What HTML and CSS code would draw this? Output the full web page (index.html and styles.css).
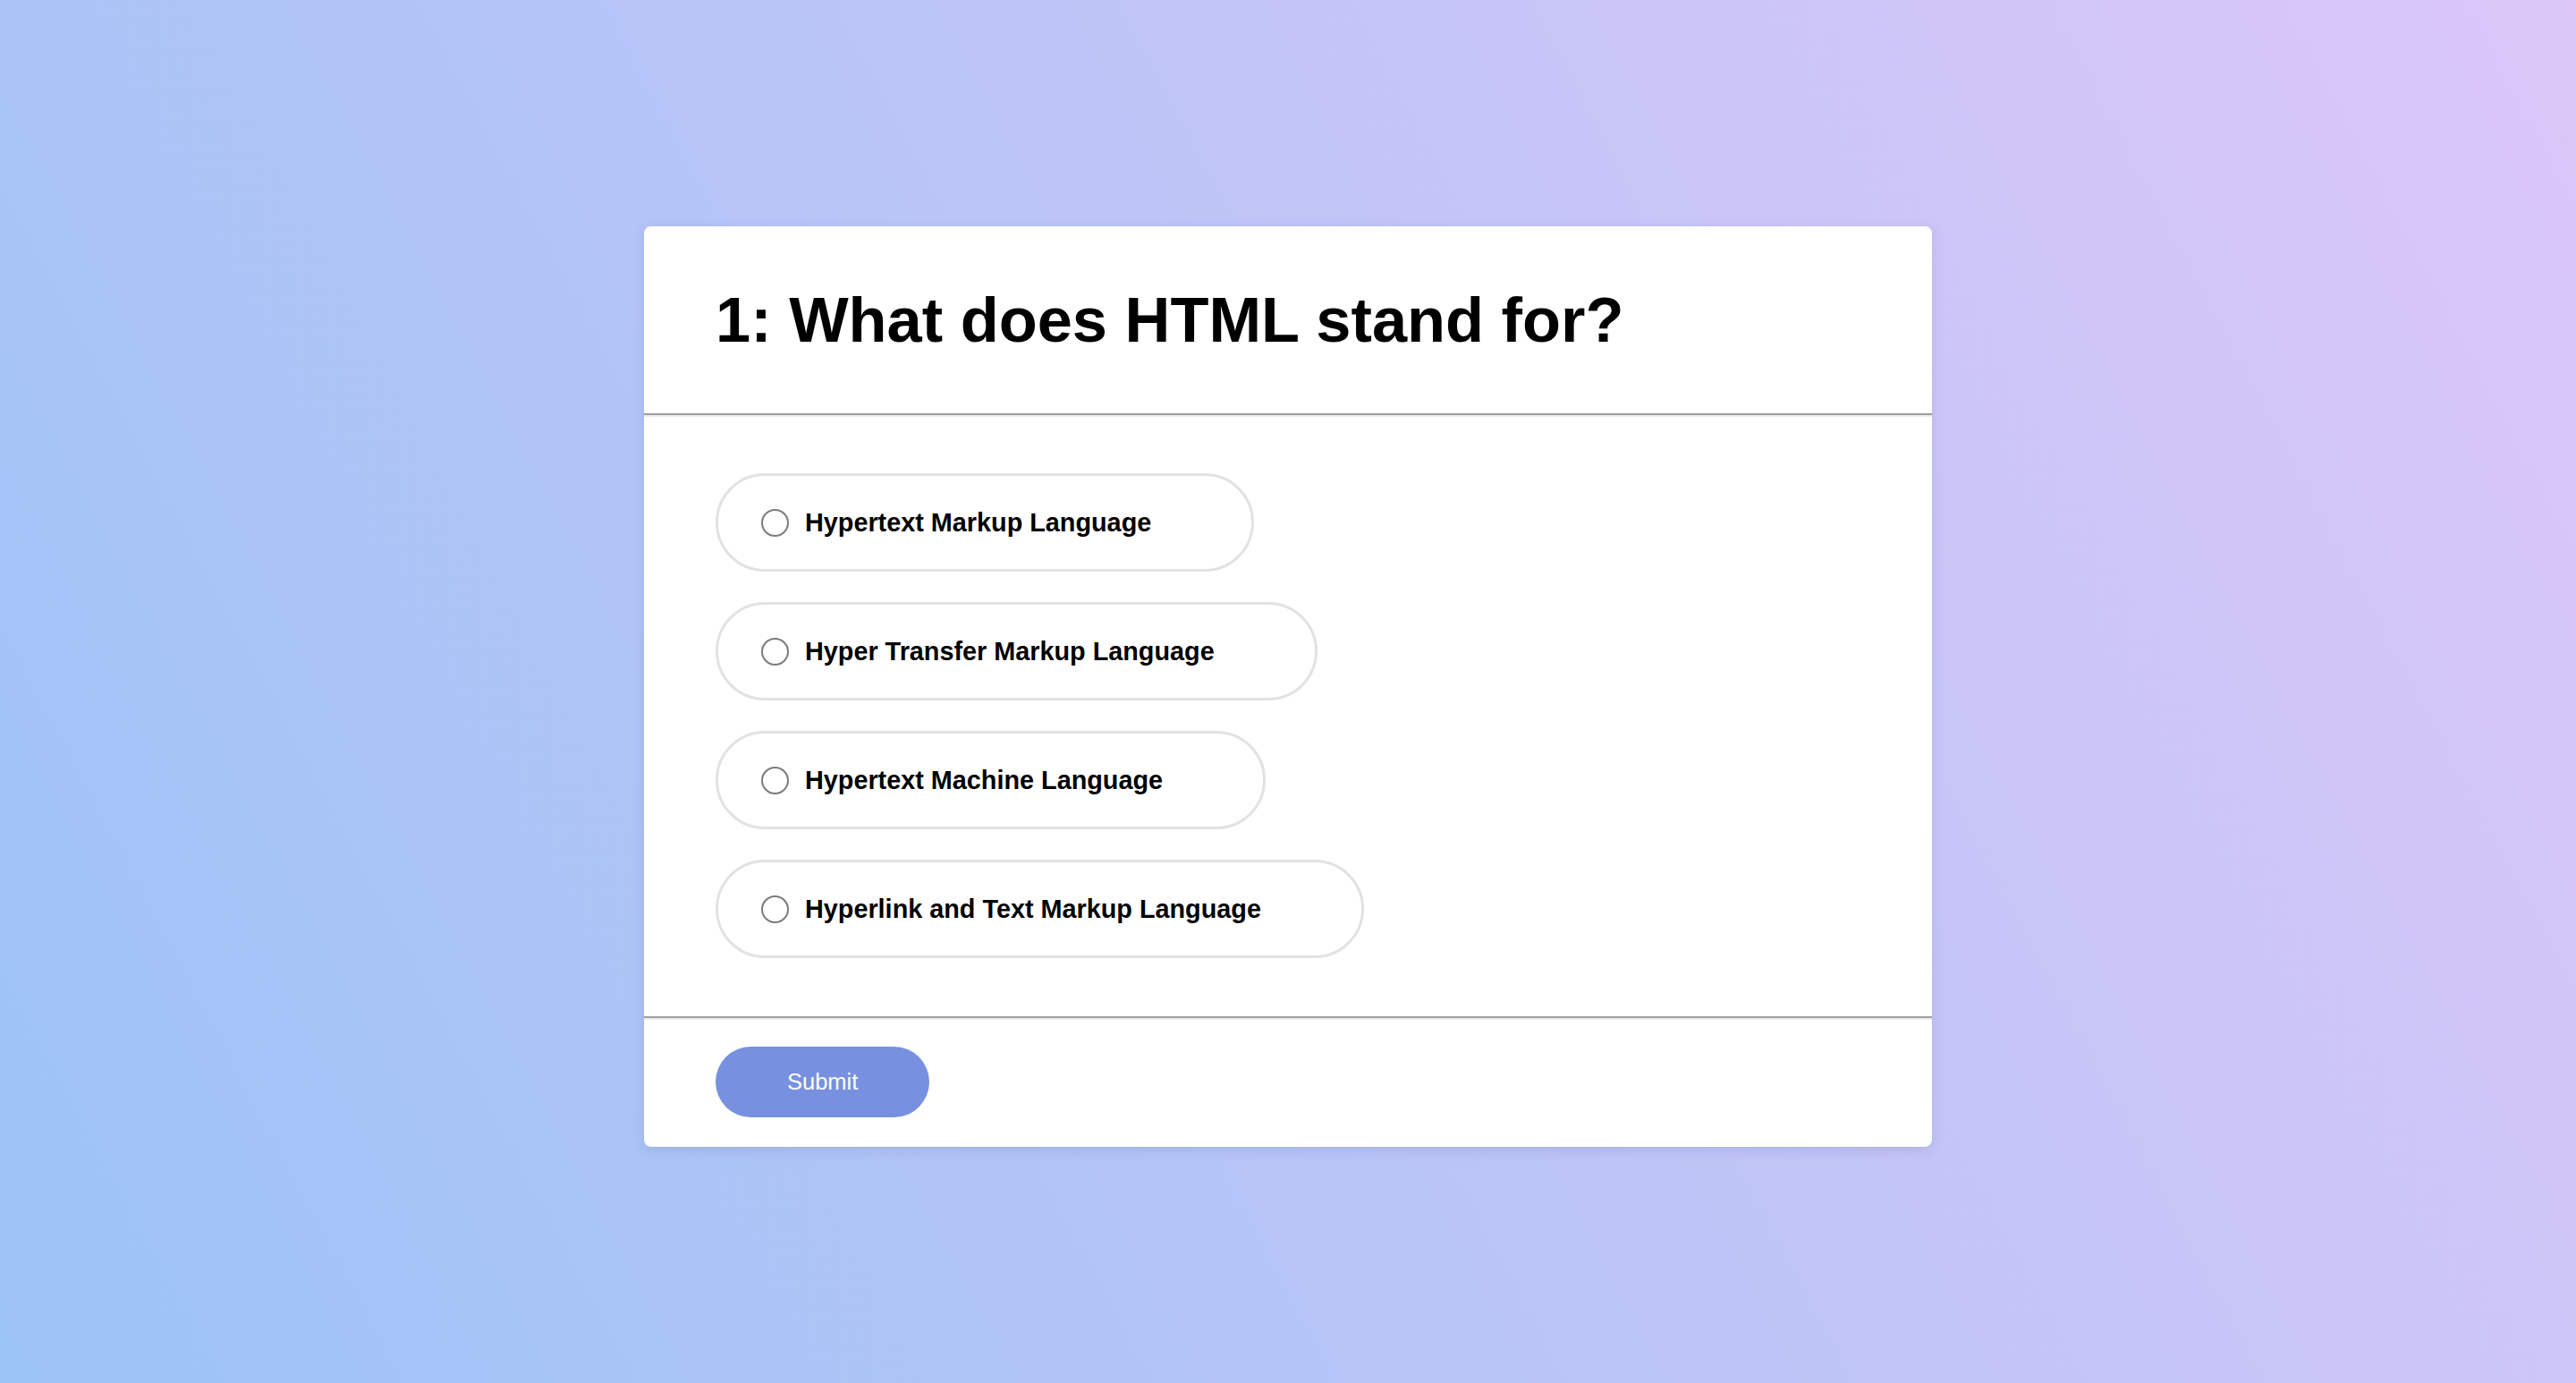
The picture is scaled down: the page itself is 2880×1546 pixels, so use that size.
FILE: index.html
```html
<!DOCTYPE html>
<html lang="en">
<head>
<meta charset="utf-8">
<title>Quiz</title>
<link rel="stylesheet" href="styles.css">
</head>
<body>
<div class="page">
  <main class="quiz-card">
    <header class="quiz-header">
      <h1 class="quiz-title">1: What does HTML stand for?</h1>
    </header>
    <hr class="divider">
    <form class="quiz-form">
      <div class="quiz-body">
        <label class="option"><input type="radio" name="q1"><span>Hypertext Markup Language</span></label>
        <label class="option"><input type="radio" name="q1"><span>Hyper Transfer Markup Language</span></label>
        <label class="option"><input type="radio" name="q1"><span>Hypertext Machine Language</span></label>
        <label class="option"><input type="radio" name="q1"><span>Hyperlink and Text Markup Language</span></label>
      </div>
      <hr class="divider">
      <footer class="quiz-footer">
        <button type="button" class="submit-btn">Submit</button>
      </footer>
    </form>
  </main>
</div>
</body>
</html>
```

FILE: styles.css
```css
html, body {
  margin: 0;
  padding: 0;
  height: 100%;
}

body {
  background: linear-gradient(62deg, rgb(156, 195, 246) 0%, rgb(220, 198, 248) 100%);
  font-family: "Liberation Sans", Arial, Helvetica, sans-serif;
  color: #000;
}

.page {
  padding-top: 253px;
}

.quiz-card {
  width: 1440px;
  margin: 0 auto;
  background: #fff;
  border-radius: 8px;
  overflow: hidden;
  box-shadow: 0 4px 14px rgba(70, 80, 140, 0.14);
}

.quiz-header {
  height: 209px;
  padding: 0 80px;
  display: flex;
  align-items: center;
}

.quiz-title {
  margin: 0;
  font-size: 70.4px;
  font-weight: 700;
  color: #000;
}

.divider {
  margin: 0;
  height: 0;
  border: 0;
  border-top: 2px solid #9e9e9e;
  border-bottom: 2px solid #ececec;
}

.quiz-form {
  margin: 0;
}

.quiz-body {
  padding: 63px 80px 65px;
  display: flex;
  flex-direction: column;
  align-items: flex-start;
  gap: 34px;
}

.option {
  box-sizing: border-box;
  height: 110px;
  display: flex;
  align-items: center;
  gap: 18px;
  padding: 0 112px 0 48px;
  border: 3px solid #e2e2e2;
  border-radius: 55px;
  font-size: 28.8px;
  font-weight: 700;
  color: #000;
  cursor: pointer;
}

.option input {
  appearance: none;
  -webkit-appearance: none;
  box-sizing: border-box;
  width: 31px;
  height: 31px;
  margin: 0;
  border: 2px solid #7b7b7b;
  border-radius: 50%;
  background: #fff;
  flex: none;
}

.quiz-footer {
  padding: 30px 80px 33px;
}

.submit-btn {
  height: 79px;
  padding: 0 80px;
  border: 0;
  border-radius: 40px;
  background: #7791e0;
  color: #fff;
  font-family: "Liberation Sans", Arial, Helvetica, sans-serif;
  font-size: 25.5px;
  cursor: pointer;
}
```
